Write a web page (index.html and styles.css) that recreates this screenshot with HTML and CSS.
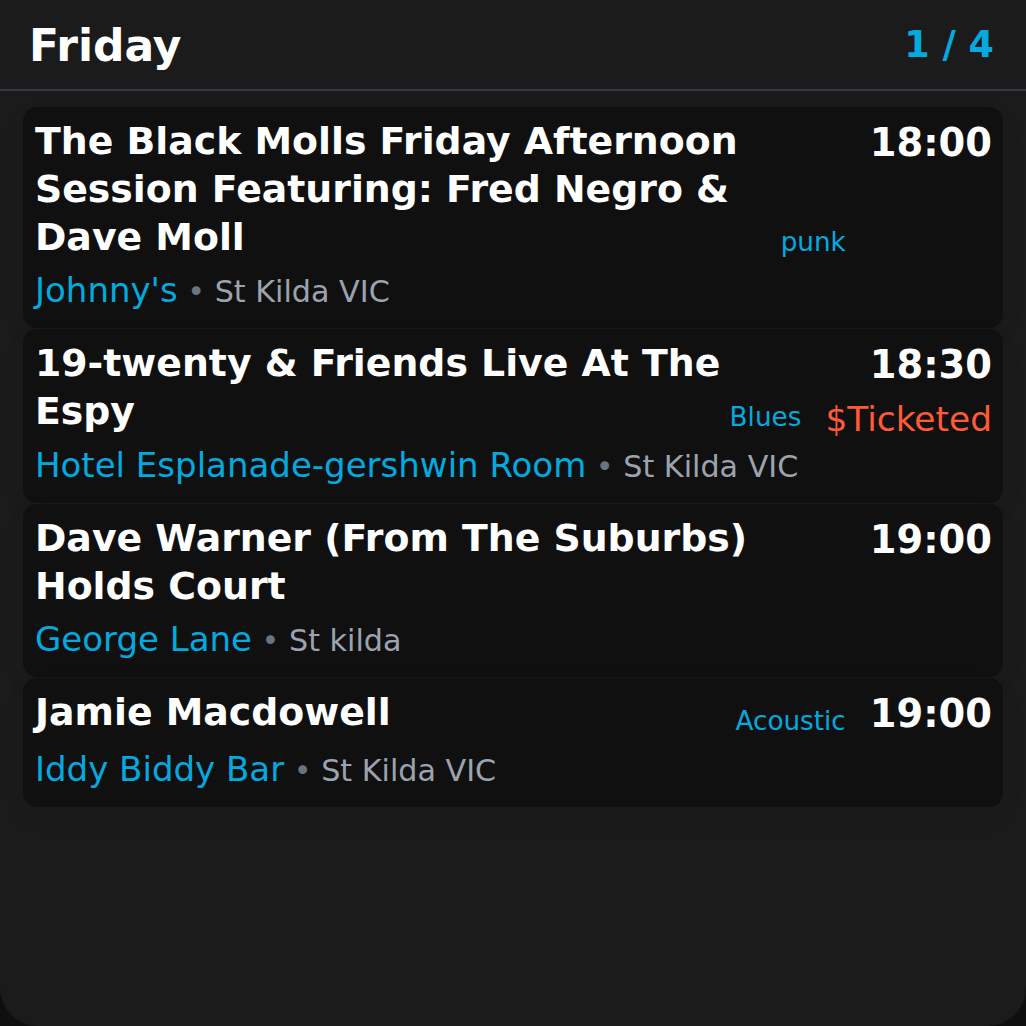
FILE: index.html
```html
<!DOCTYPE html>
<html lang="en">
<head>
<meta charset="utf-8">
<title>Friday gigs</title>
<link rel="stylesheet" href="styles.css">
</head>
<body>
<div class="app">
  <header class="head">
    <h1 class="day">Friday</h1>
    <span class="pager">1 / 4</span>
  </header>
  <main class="list">
    <article class="card">
      <div class="top">
        <h2 class="title">The Black Molls Friday Afternoon Session Featuring: Fred Negro &amp; Dave Moll</h2>
        <span class="genre">punk</span>
        <div class="side"><div class="time">18:00</div></div>
      </div>
      <div class="venue"><span class="vname">Johnny's</span><span class="sep"> • </span><span class="loc">St Kilda VIC</span></div>
    </article>
    <article class="card">
      <div class="top">
        <h2 class="title">19-twenty &amp; Friends Live At The Espy</h2>
        <span class="genre">Blues</span>
        <div class="side"><div class="time">18:30</div><div class="price">$Ticketed</div></div>
      </div>
      <div class="venue"><span class="vname">Hotel Esplanade-gershwin Room</span><span class="sep"> • </span><span class="loc">St Kilda VIC</span></div>
    </article>
    <article class="card">
      <div class="top">
        <h2 class="title">Dave Warner (From The Suburbs) Holds Court</h2>
        <div class="side"><div class="time">19:00</div></div>
      </div>
      <div class="venue"><span class="vname">George Lane</span><span class="sep"> • </span><span class="loc">St kilda</span></div>
    </article>
    <article class="card">
      <div class="top">
        <h2 class="title">Jamie Macdowell</h2>
        <span class="genre">Acoustic</span>
        <div class="side"><div class="time">19:00</div></div>
      </div>
      <div class="venue"><span class="vname">Iddy Biddy Bar</span><span class="sep"> • </span><span class="loc">St Kilda VIC</span></div>
    </article>
  </main>
</div>
</body>
</html>
```
FILE: styles.css
```css
* { box-sizing: border-box; }
html, body {
  margin: 0;
  padding: 0;
  background: #0f0f0f;
}
body {
  font-family: "DejaVu Sans", "Liberation Sans", sans-serif;
  color: #ffffff;
}
.app {
  width: 1026px;
  height: 1026px;
  background: #1b1b1b;
  border-radius: 0 0 38px 38px;
  overflow: hidden;
}
.head {
  height: 91px;
  padding: 2px 32px 0 29px;
  border-bottom: 2px solid #353a44;
  display: flex;
  align-items: center;
  justify-content: space-between;
}
.day {
  margin: 0;
  font-size: 44px;
  font-weight: bold;
  line-height: normal;
}
.pager {
  font-size: 36.6px;
  font-weight: bold;
  color: #04a9df;
  margin-bottom: 3px;
}
.list {
  padding: 16px 23px 0 23px;
  display: flex;
  flex-direction: column;
  gap: 1px;
}
.card {
  background: #101010;
  border-radius: 14px;
  padding: 10px 11px 13px 12px;
  box-shadow: 0 10px 24px rgba(0, 0, 0, 0.06);
}
.top {
  display: flex;
  align-items: flex-start;
}
.title {
  flex: 1;
  margin: 0;
  font-size: 37.8px;
  font-weight: bold;
  line-height: 48px;
}
.genre {
  align-self: flex-end;
  margin-left: 8px;
  margin-bottom: -1px;
  font-size: 26.25px;
  line-height: 1.5;
  color: #04a9df;
  white-space: nowrap;
}
.side {
  margin-left: 24px;
  text-align: right;
  white-space: nowrap;
}
.time {
  font-size: 38.4px;
  font-weight: bold;
  line-height: 51.5px;
}
.price {
  margin-top: 11.5px;
  font-size: 34.4px;
  line-height: 1;
  color: #ff5a36;
}
.venue {
  margin-top: 4px;
  font-size: 34px;
  line-height: 50px;
  height: 50px;
  white-space: nowrap;
}
.vname {
  color: #04a9df;
}
.sep {
  font-size: 30.2px;
  color: #6b7280;
}
.loc {
  font-size: 30.2px;
  color: #9ca3af;
}
```
